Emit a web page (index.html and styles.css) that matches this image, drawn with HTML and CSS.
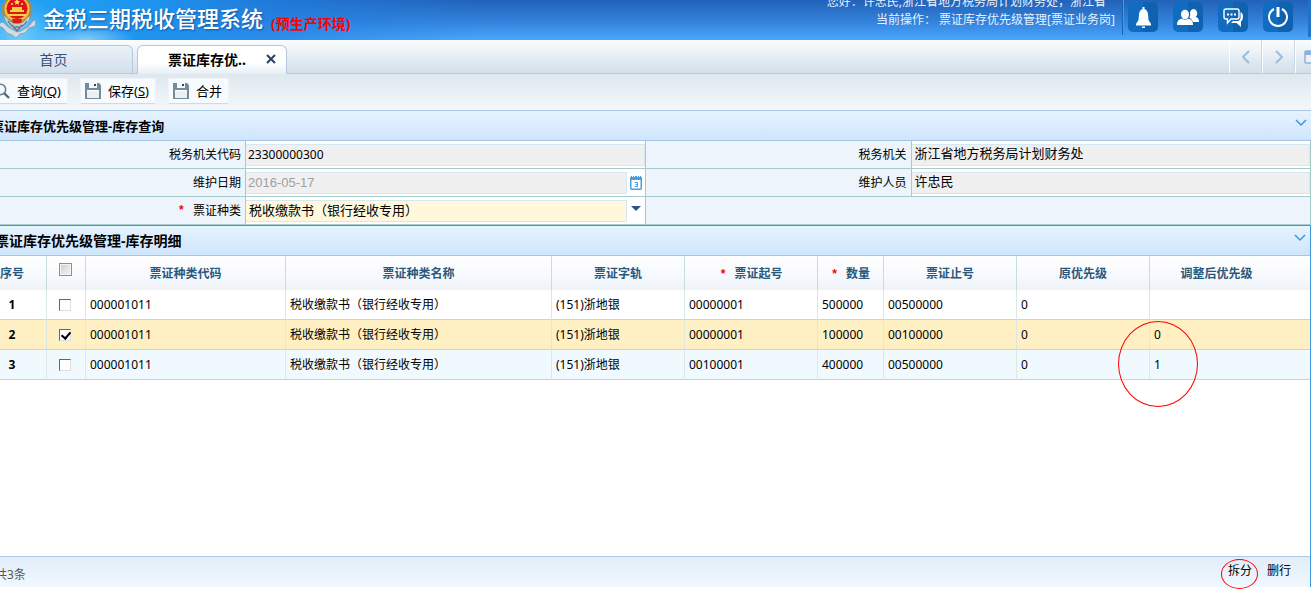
FILE: index.html
```html
<!DOCTYPE html>
<html lang="zh-CN">
<head>
<meta charset="utf-8">
<title>金税三期税收管理系统</title>
<link rel="stylesheet" href="styles.css">
</head>
<body>
<header class="banner">
  <div class="brand">
    <svg class="emblem" viewBox="0 0 36 40" aria-hidden="true">
      <path d="M0 25l3-1 5 5 7 4 3 1 3-1 7-4 5-6 3-1-1 6-6 2-4 5-5 1-4 4-4-3-5-2-4-5-4-2z" fill="#d4dbe0" stroke="#8d9ba8" stroke-width=".8"/>
      <circle cx="17" cy="12" r="15.500" fill="#9c8c62"/>
      <path d="M4 18q3 12 13 13q11-1 13-13l-3 2q-4 6-10 6t-10-6z" fill="#c3ccd2"/>
      <path d="M8 23q4 7 9 6q6 1 10-6M12 27l5 6 5-6" fill="none" stroke="#68727c" stroke-width="1.300"/>
      <circle cx="17" cy="11" r="12.500" fill="#f2c23a"/>
      <circle cx="17" cy="10.500" r="10.500" fill="#dd1517"/>
      <path d="M17 1l1 2 2 .2-1.500 1.500.4 2-1.900-1-1.900 1 .4-2L14 3.200l2-.2z" fill="#ffe25c"/>
      <circle cx="12" cy="6" r="1" fill="#ffe25c"/><circle cx="22" cy="6" r="1" fill="#ffe25c"/>
      <path d="M10 14h14v-2h-2V9H12v3h-2zM8 16h18v2H8z" fill="#f7cf45"/>
      <path d="M12 21h10l-1 4h-8z" fill="#d8211b"/>
    </svg>
    <h1 class="brand-name">金税三期税收管理系统</h1>
    <span class="brand-env">(预生产环境)</span>
  </div>
  <div class="session">
    <div class="session-text">
      <span class="session-user">您好：许忠民,浙江省地方税务局计划财务处，浙江省</span>
      <span>当前操作： 票证库存优先级管理[票证业务岗]</span>
    </div>
    <span class="session-rule"></span>
    <button class="icon-btn" aria-label="通知"><svg viewBox="0 0 30 30"><path d="M14.500 5h2v2q3 1 3.500 5l.5 6 2.500 4v1.500H8V22l2.500-4 .5-6q.5-4 3.500-5zM14 24.500h3v1.500h-3z" fill="#fff"/></svg></button>
    <button class="icon-btn" aria-label="用户"><svg viewBox="0 0 30 30"><path d="M20 7a4 4.300 0 0 1 2.500 7.800q3.500 1 3.500 5.200h-6q-1-3-3.500-4.200 1.200-2.200.5-5.300Q17.500 7.500 20 7z" fill="#fff"/><ellipse cx="12" cy="12.500" rx="4" ry="4.800" fill="#fff"/><path d="M4 23q0-6 5-6.200 3 2 6 0 5 .2 5 6.200z" fill="#fff"/></svg></button>
    <button class="icon-btn" aria-label="消息"><svg viewBox="0 0 30 30"><path d="M8 7h11q2 0 2 2v6q0 2-2 2h-6l-3.500 4v-4H8q-2 0-2-2V9q0-2 2-2z" fill="none" stroke="#fff" stroke-width="1.400"/><path d="M22.500 10q2.500 1 2.500 5 0 3-2 4.500V25l-4.500-4H13l2-2h5q2.500-.5 2.500-3z" fill="#fff"/><path d="M9 11.500h2v2H9zM12.500 11.500h2v2h-2zM16 11.500h2v2h-2z" fill="#fff"/></svg></button>
    <button class="icon-btn" aria-label="退出"><svg viewBox="0 0 30 30"><path d="M11 7a9 9 0 1 0 8 0" fill="none" stroke="#fff" stroke-width="2"/><path d="M13.500 5h3v10h-3z" fill="#fff"/></svg></button>
    <span class="session-edge"></span>
  </div>
</header>

<nav class="tabs">
  <button class="tab">首页</button>
  <button class="tab tab-active"><span>票证库存优..</span>
    <svg class="tab-close" viewBox="0 0 10 10"><path d="M1 1l8 8M9 1l-8 8" stroke="#2c3f63" stroke-width="2"/></svg>
  </button>
  <div class="tab-nav">
    <button class="nav-btn" aria-label="向左"><svg viewBox="0 0 8 14"><path d="M7 1L1 7l6 6" fill="none" stroke="#9dbce0" stroke-width="2"/></svg></button>
    <button class="nav-btn" aria-label="向右"><svg viewBox="0 0 8 14"><path d="M1 1l6 6-6 6" fill="none" stroke="#9dbce0" stroke-width="2"/></svg></button>
    <button class="nav-btn nav-cut" aria-label="窗口"><svg viewBox="0 0 14 14"><rect x="1" y="1" width="12" height="12" rx="1" fill="#eaf1f8" stroke="#8db1da" stroke-width="1.500"/><path d="M1 1h12v4H1z" fill="#8db1da"/></svg></button>
  </div>
</nav>

<div class="toolbar">
  <button class="tool tool-first"><svg viewBox="0 0 16 16"><circle cx="6.500" cy="6.500" r="5.200" fill="#f6fafd" stroke="#6b8295" stroke-width="1.600"/><path d="M10 10l5 5" stroke="#53697c" stroke-width="2.400"/></svg><span>查询(<u>Q</u>)</span></button>
  <button class="tool"><svg viewBox="0 0 16 16"><path d="M0 0h14l2 2v14H0z" fill="#748b9c"/><path d="M4 0h8v5H4z" fill="#f4f8fb"/><path d="M9 1h2v2H9z" fill="#2f4352"/><path d="M2 7h12v8H2z" fill="#e8f0f5"/><path d="M2 7h12v1H2z" fill="#fff"/></svg><span>保存(<u>S</u>)</span></button>
  <button class="tool"><svg viewBox="0 0 16 16"><path d="M0 0h14l2 2v14H0z" fill="#748b9c"/><path d="M4 0h8v5H4z" fill="#f4f8fb"/><path d="M9 1h2v2H9z" fill="#2f4352"/><path d="M2 7h12v8H2z" fill="#e8f0f5"/><path d="M2 7h12v1H2z" fill="#fff"/></svg><span>合并</span></button>
</div>

<section>
  <div class="panel-head">
    <h2 class="panel-title title-query">票证库存优先级管理-库存查询</h2>
    <svg class="chevron" viewBox="0 0 12 8"><path d="M1 1l5 5 5-5" fill="none" stroke="#3f97de" stroke-width="1.500"/></svg>
  </div>
  <form class="query">
    <label class="q-label" for="org-code">税务机关代码</label>
    <div class="q-value"><input class="q-input digits" id="org-code" value="23300000300" readonly></div>
    <label class="q-label" for="org">税务机关</label>
    <div class="q-value"><input class="q-input" id="org" value="浙江省地方税务局计划财务处" readonly></div>

    <label class="q-label" for="date">维护日期</label>
    <div class="q-value"><input class="q-input dim" id="date" value="2016-05-17" readonly>
      <span class="q-addon"><svg class="calendar" viewBox="0 0 12 14"><rect x=".75" y="1.750" width="10.500" height="11.500" rx="1" fill="#fff" stroke="#4f9ed9" stroke-width="1.500"/><path d="M1 0h1v1h1V0h1v1h1V0h2v1h1V0h1v1h1V0h1v1h1v3H0V1h1z" fill="#4f9ed9"/><path d="M4.500 6.500h3v4h-3M5.500 8.500h2" fill="none" stroke="#4f9ed9"/></svg></span></div>
    <label class="q-label" for="keeper">维护人员</label>
    <div class="q-value"><input class="q-input" id="keeper" value="许忠民" readonly></div>

    <label class="q-label" for="kind"><span class="star">*</span>票证种类</label>
    <div class="q-value"><select class="q-input q-select" id="kind"><option>税收缴款书（银行经收专用）</option></select>
      <span class="q-addon"><svg class="caret" viewBox="0 0 10 6"><path d="M0 0h10L5 5z" fill="#2f4f8c"/></svg></span></div>
    <div class="q-blank"></div>
  </form>
</section>

<section class="detail">
  <div class="panel-head panel-detail">
    <h2 class="panel-title title-detail">票证库存优先级管理-库存明细</h2>
    <svg class="chevron" viewBox="0 0 12 8"><path d="M1 1l5 5 5-5" fill="none" stroke="#3f97de" stroke-width="1.500"/></svg>
  </div>
  <div class="grid-area">
    <table class="grid">
      <colgroup><col class="w-no"><col class="w-check"><col class="w-code"><col class="w-name"><col class="w-mid"><col class="w-mid"><col class="w-qty"><col class="w-mid"><col class="w-mid"><col></colgroup>
      <thead>
        <tr><th class="no">序号</th><th class="check"><input class="box box-all" type="checkbox" aria-label="全选"></th><th>票证种类代码</th><th>票证种类名称</th><th>票证字轨</th><th><span class="star">*</span>票证起号</th><th><span class="star">*</span>数量</th><th>票证止号</th><th>原优先级</th><th class="last">调整后优先级</th></tr>
      </thead>
      <tbody>
        <tr><td class="no">1</td><td class="check"><input class="box" type="checkbox" aria-label="第1行"></td><td>000001011</td><td>税收缴款书（银行经收专用）</td><td>(151)浙地银</td><td>00000001</td><td>500000</td><td>00500000</td><td>0</td><td></td></tr>
        <tr class="selected"><td class="no">2</td><td class="check"><input class="box" type="checkbox" checked aria-label="第2行"></td><td>000001011</td><td>税收缴款书（银行经收专用）</td><td>(151)浙地银</td><td>00000001</td><td>100000</td><td>00100000</td><td>0</td><td class="marked">0<span class="ring ring-large"></span></td></tr>
        <tr class="even"><td class="no">3</td><td class="check"><input class="box" type="checkbox" aria-label="第3行"></td><td>000001011</td><td>税收缴款书（银行经收专用）</td><td>(151)浙地银</td><td>00100001</td><td>400000</td><td>00500000</td><td>0</td><td>1</td></tr>
      </tbody>
    </table>
  </div>
  <footer class="summary">
    <span class="count">共3条</span>
    <div class="actions">
      <button class="action">拆分<span class="ring ring-small"></span></button>
      <button class="action">删行</button>
    </div>
  </footer>
</section>
</body>
</html>
```
FILE: styles.css
```css
* { box-sizing: border-box; }
body {
  margin: 0;
  min-height: 100vh;
  padding-bottom: 8px;
  display: flex;
  flex-direction: column;
  overflow: hidden;
  background: #fff;
  color: #000;
  font: 12px/18px "Noto Sans", "Noto Sans CJK SC", sans-serif;
}
button, input, select { font: inherit; color: inherit; margin: 0; border-radius: 0; }
button { border: 0; padding: 0; background: none; }
svg { display: block; flex: none; }

.banner {
  height: 40px;
  display: flex;
  justify-content: space-between;
  overflow: hidden;
  background:
    radial-gradient(ellipse 50px 16px at 85px 40px, rgba(200, 235, 255, .6), transparent),
    radial-gradient(ellipse 50px 40px at 20px 40px, rgba(130, 215, 255, .8), transparent),
    linear-gradient(90deg, #22a4f6 0, #1e92ee 160px, rgba(32, 130, 228, .7) 270px, rgba(36, 120, 215, 0) 480px),
    linear-gradient(#2262b8, #3482dc 55%, #4aa8fc);
}
.brand { display: flex; align-items: flex-start; }
.emblem { width: 36px; height: 40px; margin-top: -2px; }
.brand-name {
  margin: 2px 8px 0 7px;
  font-size: 22px;
  line-height: 32px;
  font-weight: 500;
  color: #fff;
  text-shadow: 1px 1px 2px #14509c;
  white-space: nowrap;
}
.brand-env { margin-top: 14px; font-size: 14px; line-height: 20px; font-weight: bold; color: #f00; white-space: nowrap; }
.session { display: flex; align-items: flex-start; gap: 15px; padding-top: 2px; }
.session-text { display: flex; flex-direction: column; align-items: flex-end; margin: -9px -8px 0 0; color: #e6f2ff; white-space: nowrap; }
.session-user { margin-right: 9px; }
.session-rule { width: 1px; height: 35px; margin: -2px -10px 0 0; background: #1766b4; box-shadow: 1px 0 #3f9be8; }
.icon-btn { width: 30px; height: 30px; border-radius: 5px; background: linear-gradient(90deg, #116cc0 50%, #0f62b0 50%); }
.session-edge { width: 3px; height: 37px; margin-top: -2px; background: #2372c9; }

.tabs {
  height: 34px;
  display: flex;
  align-items: flex-end;
  gap: 4px;
  border-bottom: 1px solid #b4cbe2;
  background: linear-gradient(#fbfdfe, #e2eaf2 60%, #d2dfea);
}
.tab {
  width: 133px;
  height: 28px;
  padding-right: 25px;
  border: 1px solid #b4c9e0;
  border-width: 1px 1px 0 0;
  border-radius: 0 6px 0 0;
  background: linear-gradient(#eaf1f6, #d3e0ec);
  color: #38527c;
  font-size: 14px;
}
.tab-active {
  width: 150px;
  height: 29px;
  margin-bottom: -1px;
  padding: 0 10px 0 30px;
  display: flex;
  align-items: center;
  justify-content: space-between;
  border-left-width: 1px;
  border-radius: 6px 6px 0 0;
  background: linear-gradient(#fff 60%, #e6eef5);
  color: #000;
  font-weight: bold;
}
.tab-close { width: 10px; height: 10px; margin-bottom: 2px; }
.tab-nav { display: flex; align-self: stretch; margin-left: auto; }
.nav-btn { width: 33px; display: grid; place-items: center; border-left: 1px solid #fff; border-right: 1px solid #c8d8e7; }
.nav-btn svg { width: 8px; height: 14px; }
.nav-cut { width: 16px; overflow: hidden; justify-items: start; padding-left: 8px; border-right: 0; }
.nav-cut svg { width: 14px; }

.toolbar {
  height: 36px;
  display: flex;
  align-items: center;
  gap: 12px;
  padding-bottom: 2px;
  background: linear-gradient(#dfe8ef, #f3f7fa);
}
.tool {
  height: 26px;
  display: flex;
  align-items: center;
  gap: 7px;
  padding: 0 6px 0 4px;
  border: 1px solid #eef3f7;
  border-bottom-color: #d4d9dd;
  border-radius: 2px;
  background: #f8fbfd;
  font-size: 13px;
}
.tool-first { margin-left: -11px; }
.tool svg { width: 16px; height: 16px; }

.panel-head {
  height: 31px;
  display: flex;
  align-items: center;
  justify-content: space-between;
  padding-right: 4px;
  border-top: 1px solid #abc8e6;
  border-bottom: 1px solid #a3c6e4;
  background: linear-gradient(#e6f3ff, #cfe5fc);
}
.panel-title { margin: 0; white-space: nowrap; font-weight: bold; }
.title-query { margin-left: -9px; font-size: 13px; }
.title-detail { margin-left: -5px; font-size: 14px; }
.chevron { width: 12px; height: 8px; margin-bottom: 6px; }
.panel-detail { border-top-color: #3f97de; }

.query { display: grid; grid-template-columns: 246px 1fr 266px 1fr; grid-auto-rows: 28px; }
.q-label, .q-value, .q-blank { border-right: 1px solid #a6cbcb; border-bottom: 1px solid #a6cbcb; }
.q-label, .q-blank { background: #edf4fc; }
.q-label { display: flex; align-items: center; justify-content: flex-end; padding-right: 4px; }
.q-value { display: flex; align-items: center; min-width: 0; }
.q-blank { grid-column: span 2; }
.q-input {
  flex: 1;
  min-width: 0;
  height: 22px;
  padding: 0 3px 4px;
  border: 1px solid #d7e7f0;
  border-left: 0;
  background: #f0f0f0;
  font-size: 13px;
}
.digits { font-size: 12px; padding: 0 2px; }
.dim { padding: 0 2px; font-family: "Liberation Sans", sans-serif; color: #a0a0a0; }
.q-select { appearance: none; background: #fff8dc; }
.q-addon { width: 18px; display: grid; place-items: center; }
.calendar { width: 12px; height: 14px; }
.caret { width: 10px; height: 6px; margin-bottom: 4px; }
.star { margin-right: 8px; color: #f00; font-family: "Liberation Mono", monospace; font-weight: bold; }

.detail { flex: 1; display: flex; flex-direction: column; border-right: 1px solid #3f97de; }
.grid-area { flex: 1; }
.grid { width: 100%; table-layout: fixed; border-collapse: separate; border-spacing: 0; }
.w-no { width: 47px; }
.w-check { width: 39px; }
.w-code { width: 200px; }
.w-name { width: 266px; }
.w-mid { width: 133px; }
.w-qty { width: 66px; }
.grid th {
  height: 34px;
  padding: 2px 0 0;
  border-right: 1px solid #c3dedb;
  background: linear-gradient(#fff, #f6f9fd 60%, #eff3f7);
  color: #29587c;
  white-space: nowrap;
}
.grid td { height: 30px; padding: 0 4px; border-right: 1px solid #dce8e4; border-bottom: 1px solid #bddad7; white-space: nowrap; }
.grid th:last-child, .grid td:last-child { border-right: 0; }
.grid .no { padding-left: 0; padding-right: 22px; text-align: center; font-weight: bold; }
.grid .check { padding: 0 2px 0 0; text-align: center; }
.grid .last { padding-right: 27px; }
.selected { background: #fff0c4; }
.even { background: #f0f9fd; }
.box {
  appearance: none;
  display: block;
  width: 12px;
  height: 12px;
  margin: 0 auto;
  border: 1px solid #ddd;
  border-top: 1px solid #666;
  border-left: 1px solid #666;
  background: #fff;
}
.box:checked::before {
  content: "";
  display: block;
  width: 4px;
  height: 7px;
  margin-left: 3px;
  border: solid #000;
  border-width: 0 2px 2px 0;
  transform: rotate(40deg);
}
.box-all { width: 13px; height: 13px; margin-bottom: 7px; border: 1px solid #8e8f8f; background: linear-gradient(135deg, #c9cdd2, #f6f6f6); box-shadow: inset 0 0 0 1px #f4f4f4; }
.ring { position: absolute; border: 1px solid #f00; border-radius: 50%; pointer-events: none; }
.marked { position: relative; }
.ring-large { left: -32px; top: 1px; width: 80px; height: 86px; }
.ring-small { left: -7px; top: -3px; width: 37px; height: 30px; }

.summary {
  height: 31px;
  display: flex;
  align-items: flex-start;
  justify-content: space-between;
  border-top: 1px solid #abcdea;
  background: linear-gradient(#e1edf9, #f1f8fe);
}
.count { margin: 9px 0 0 -5px; color: #555; }
.actions { display: flex; gap: 15px; padding: 5px 19px 0 0; }
.action { position: relative; }
```
